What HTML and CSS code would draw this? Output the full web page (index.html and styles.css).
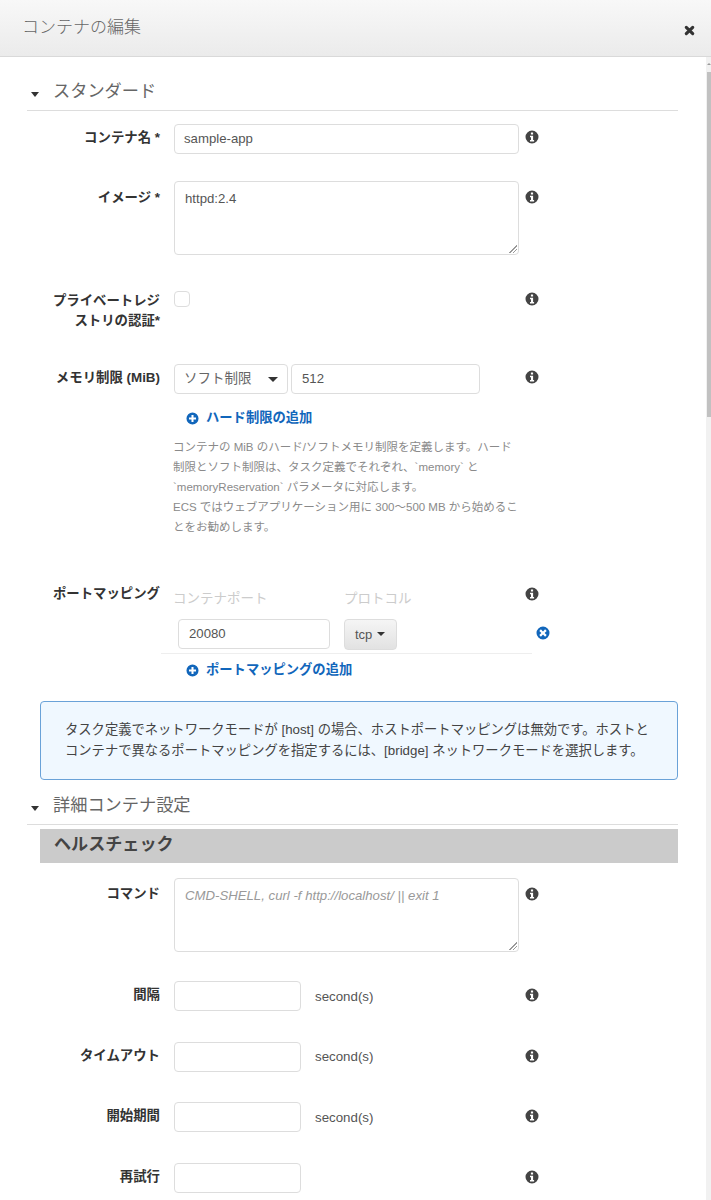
FILE: index.html
```html
<!DOCTYPE html>
<html lang="ja">
<head>
<meta charset="utf-8">
<title>コンテナの編集</title>
<link rel="stylesheet" href="styles.css">
</head>
<body>
<svg class="defs" width="0" height="0">
  <symbol id="info" viewBox="0 0 14 14"><path fill-rule="evenodd" d="M7 .5a6.5 6.5 0 1 0 0 13 6.5 6.5 0 0 0 0-13zM5.9 2.6h2.2v1.9H5.900zM5 5.700h3.100v4.200h1v1.500H5V9.900h1V7.200H5z"/></symbol>
  <symbol id="plus" viewBox="0 0 14 14"><path fill-rule="evenodd" d="M7 .5a6.500 6.500 0 1 0 0 13 6.500 6.500 0 0 0 0-13zM5.900 3.200h2.200v2.700h2.700v2.200H8.100v2.700H5.900V8.100H3.200V5.900h2.700z"/></symbol>
  <symbol id="cross" viewBox="0 0 14 14"><path fill-rule="evenodd" d="M7 .5a6.500 6.500 0 1 0 0 13 6.500 6.500 0 0 0 0-13zM4.900 3.300 7 5.400l2.100-2.100 1.600 1.600L8.600 7l2.100 2.100-1.600 1.600L7 8.600l-2.100 2.100-1.600-1.600L5.400 7 3.300 4.900z"/></symbol>
</svg>
<div class="modal">
  <header class="modal-head">
    <h1 class="modal-title">コンテナの編集</h1>
    <svg class="close" viewBox="0 0 12 12"><path d="M2.500 2.500 9.500 9.500M9.500 2.500 2.500 9.500"/></svg>
  </header>
  <div class="scroll-track"><span class="scroll-arrow"></span><div class="scroll-thumb"></div></div>
  <main class="modal-body">
    <h2 class="section first"><span class="caret"></span>スタンダード</h2>

    <div class="row row-name">
      <label class="label">コンテナ名 *</label>
      <div class="field"><div class="input wide">sample-app</div></div>
      <svg class="icon info"><use href="#info"/></svg>
    </div>

    <div class="row row-image">
      <label class="label">イメージ *</label>
      <div class="field"><div class="input wide area">httpd:2.4<span class="grip"></span></div></div>
      <svg class="icon info"><use href="#info"/></svg>
    </div>

    <div class="row row-auth">
      <label class="label">プライベートレジストリの認証*</label>
      <div class="field"><span class="check"></span></div>
      <svg class="icon info"><use href="#info"/></svg>
    </div>

    <div class="row row-mem">
      <label class="label">メモリ制限 (MiB)</label>
      <div class="field">
        <div class="mem-line">
          <div class="input select">ソフト制限<span class="select-caret"></span></div>
          <div class="input mem">512</div>
        </div>
        <a class="add add-hard"><svg class="icon-add"><use href="#plus"/></svg>ハード制限の追加</a>
        <p class="help">コンテナの MiB のハード/ソフトメモリ制限を定義します。ハード制限とソフト制限は、タスク定義でそれぞれ、`memory` と `memoryReservation` パラメータに対応します。<br>ECS ではウェブアプリケーション用に 300〜500 MB から始めることをお勧めします。</p>
      </div>
      <svg class="icon info"><use href="#info"/></svg>
    </div>

    <div class="row row-port">
      <label class="label">ポートマッピング</label>
      <div class="field">
        <div class="port-heads"><span class="port-head port-head-a">コンテナポート</span><span class="port-head">プロトコル</span></div>
      </div>
      <svg class="icon info"><use href="#info"/></svg>
    </div>
    <div class="port-row">
      <div class="input port">20080</div>
      <div class="tcp">tcp<span class="tcp-caret"></span></div>
      <svg class="icon cross"><use href="#cross"/></svg>
    </div>
    <a class="add add-port"><svg class="icon-add"><use href="#plus"/></svg>ポートマッピングの追加</a>

    <div class="notice">タスク定義でネットワークモードが [host] の場合、ホストポートマッピングは無効です。ホストとコンテナで異なるポートマッピングを指定するには、[bridge] ネットワークモードを選択します。</div>

    <h2 class="section second"><span class="caret"></span>詳細コンテナ設定</h2>
    <h3 class="band">ヘルスチェック</h3>

    <div class="row row-cmd">
      <label class="label">コマンド</label>
      <div class="field"><div class="input wide area placeholder">CMD-SHELL, curl -f http://localhost/ || exit 1<span class="grip"></span></div></div>
      <svg class="icon info"><use href="#info"/></svg>
    </div>
    <div class="row row-num">
      <label class="label">間隔</label>
      <div class="field num-line"><div class="input num"></div><span class="unit">second(s)</span></div>
      <svg class="icon info"><use href="#info"/></svg>
    </div>
    <div class="row row-num">
      <label class="label">タイムアウト</label>
      <div class="field num-line"><div class="input num"></div><span class="unit">second(s)</span></div>
      <svg class="icon info"><use href="#info"/></svg>
    </div>
    <div class="row row-num">
      <label class="label">開始期間</label>
      <div class="field num-line"><div class="input num"></div><span class="unit">second(s)</span></div>
      <svg class="icon info"><use href="#info"/></svg>
    </div>
    <div class="row row-num">
      <label class="label">再試行</label>
      <div class="field num-line"><div class="input num"></div></div>
      <svg class="icon info"><use href="#info"/></svg>
    </div>
  </main>
</div>
</body>
</html>
```
FILE: styles.css
```css
* { box-sizing: border-box; }
html, body { margin: 0; height: 1200px; overflow: hidden; background: #fff; }
body { font-family: "Liberation Sans", "Noto Sans CJK JP", sans-serif; font-size: 13px; color: #444; }
.defs { display: block; height: 0; }
.modal { position: relative; height: 1200px; overflow: hidden; }
.modal-head { height: 57px; display: flex; align-items: flex-start; justify-content: space-between; padding: 17px 16px 0 22px; background: linear-gradient(#f8f8f8, #ebebeb); border-bottom: 1px solid #d9d9d9; }
.modal-title { margin: 0; font-size: 17px; line-height: 22px; font-weight: 300; color: #666; }
.close { width: 11px; height: 11px; margin-top: 8px; fill: none; stroke: #333; stroke-width: 3.400; stroke-linecap: round; }
.scroll-track { position: absolute; top: 57px; right: 0; width: 5px; height: 1143px; background: #f1f1f1; }
.scroll-arrow { position: absolute; top: 6px; left: 1px; width: 0; height: 0; border: 2px solid transparent; border-bottom: 2px solid #999; border-top: 0; }
.scroll-thumb { position: absolute; top: 15px; left: 1px; width: 4px; height: 345px; background: #c1c1c1; }
.modal-body { padding: 0 33px 0 27px; }
.section { margin: 0; display: flex; align-items: center; height: 34px; padding-bottom: 8px; font-size: 17.200px; font-weight: 400; color: #666; border-bottom: 1px solid #ddd; }
.section.first { margin-top: 20px; }
.section.second { margin-top: 11px; }
.caret { width: 0; height: 0; margin: 10px 14px 0 4px; border: 4.500px solid transparent; border-top: 5px solid #333; border-bottom: 0; }
.row { display: flex; align-items: flex-start; }
.label { width: 133px; flex: none; padding-left: 24px; text-align: right; font-size: 13.400px; font-weight: 700; line-height: 21px; color: #333; }
.field { width: 345px; margin-left: 14px; flex: none; }
.icon { width: 14px; height: 14px; fill: #444; flex: none; }
.info { margin: 6px 0 0 6px; }
.input { border: 1px solid #ddd; border-radius: 4px; background: #fff; height: 30px; padding: 0 9px; font-size: 13.200px; line-height: 28px; color: #555; }
.wide { width: 345px; }
.area { height: 74px; line-height: 18px; padding-top: 8px; padding-left: 10px; position: relative; }
.placeholder { font-style: italic; color: #999; }
.grip { position: absolute; right: 1px; bottom: 1px; width: 9px; height: 9px; background: linear-gradient(135deg, transparent 55%, #999 55%, #999 62%, transparent 62%, transparent 75%, #999 75%, #999 82%, transparent 82%); }
.row-name { margin-top: 13px; height: 57px; }
.row-name .label { padding-top: 3px; }
.row-image { height: 110px; }
.row-image .label { padding-top: 6px; }
.row-image .info { margin-top: 9px; }
.row-auth { height: 73px; }
.row-auth .label { line-height: 20px; padding-top: 0; }
.row-auth .info { margin-top: 1px; }
.check { display: block; width: 16px; height: 16px; border: 1px solid #ddd; border-radius: 4px; }
.row-mem { height: 220px; }
.row-mem .label { padding-top: 3px; }
.row-mem .info { margin-top: 6px; }
.mem-line { display: flex; gap: 3px; }
.select { width: 114px; display: flex; align-items: center; justify-content: space-between; font-size: 13.500px; color: #666; }
.select-caret { width: 0; height: 0; border: 5px solid transparent; border-top: 5px solid #333; border-bottom: 0; }
.mem { width: 189px; padding-left: 10px; }
.add { display: flex; align-items: center; font-size: 13.300px; font-weight: 700; line-height: 20px; color: #1166bb; }
.icon-add { width: 13px; height: 13px; fill: #1166bb; margin-right: 7px; flex: none; }
.add-hard { margin: 14px 0 0 12px; }
.help { margin: 9px 0 0 -1px; font-size: 11.500px; line-height: 20px; color: #8a8a8a; width: 346px; }
.row-port { height: 35px; }
.row-port .label { line-height: 20px; }
.row-port .info { margin-top: 3px; }
.port-heads { display: flex; margin-left: -1px; padding-top: 5px; font-size: 13.500px; line-height: 20px; color: #ccc; }
.port-head-a { width: 171px; }
.port-row { display: flex; align-items: flex-start; height: 35px; margin-left: 134px; width: 371px; padding-left: 17px; border-bottom: 1px solid #eee; position: relative; }
.port { width: 152px; padding-left: 10px; }
.tcp { margin-left: 14px; width: 53px; height: 31px; border: 1px solid #ddd; border-radius: 4px; background: linear-gradient(#f5f5f5, #e2e2e2); font-size: 13px; line-height: 30px; padding-left: 10px; color: #555; display: flex; align-items: center; }
.tcp-caret { width: 0; height: 0; margin: 0 0 2px 5px; border: 4px solid transparent; border-top: 4px solid #333; border-bottom: 0; }
.cross { position: absolute; left: 375px; top: 7px; fill: #1166bb; width: 14px; height: 14px; }
.add-port { margin: 6px 0 0 159px; }
.notice { margin: 21px 0 0 13px; height: 79px; padding: 18px 16px 0 24px; border: 1px solid #6aa2d8; border-radius: 4px; background: #f0f8ff; font-size: 13.300px; line-height: 20.500px; color: #444; }
.band { margin: 4px 0 0 13px; height: 34px; padding-left: 14px; background: #cbcbcb; font-size: 17.100px; line-height: 32px; font-weight: 700; color: #444; }
.row-cmd { margin-top: 15px; height: 103px; }
.row-cmd .label { padding-top: 5px; }
.row-cmd .info { margin-top: 9px; }
.num-line { display: flex; align-items: center; height: 30px; }
.num { width: 127px; }
.unit { margin-left: 14px; font-size: 13.300px; color: #555; }
.row-num { height: 60.670px; }
.row-num .label { padding-top: 3px; }
.row-num .info { margin-top: 7px; }
```
